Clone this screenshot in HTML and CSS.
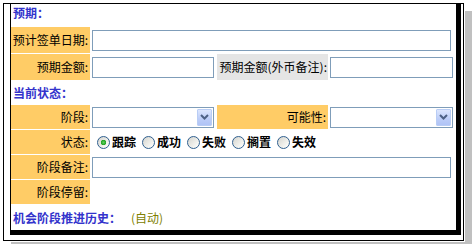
FILE: index.html
```html
<!DOCTYPE html>
<html lang="zh-CN">
<head>
<meta charset="utf-8">
<title>机会</title>
<link rel="stylesheet" href="styles.css">
</head>
<body>
<div class="frame">
  <div class="panel">
    <div class="form">
      <div class="section first">预期：</div>

      <div class="label">预计签单日期:</div>
      <div class="field span3"><input type="text" class="text long"></div>

      <div class="label">预期金额:</div>
      <div class="field"><input type="text" class="text short"></div>
      <div class="label gray">预期金额(外币备注):</div>
      <div class="field"><input type="text" class="text short2"></div>

      <div class="section">当前状态：</div>

      <div class="label">阶段:</div>
      <div class="field">
        <div class="select short">
          <span class="arrow"><svg width="9" height="6" viewBox="0 0 9 6"><path d="M1 1 L4.5 4.5 L8 1" fill="none" stroke="#4d6185" stroke-width="2"/></svg></span>
        </div>
      </div>
      <div class="label">可能性:</div>
      <div class="field">
        <div class="select short2">
          <span class="arrow"><svg width="9" height="6" viewBox="0 0 9 6"><path d="M1 1 L4.5 4.5 L8 1" fill="none" stroke="#4d6185" stroke-width="2"/></svg></span>
        </div>
      </div>

      <div class="label">状态:</div>
      <div class="field span3 radios">
        <label class="opt"><input type="radio" name="st" checked>跟踪</label>
        <label class="opt"><input type="radio" name="st">成功</label>
        <label class="opt"><input type="radio" name="st">失败</label>
        <label class="opt"><input type="radio" name="st">搁置</label>
        <label class="opt"><input type="radio" name="st">失效</label>
      </div>

      <div class="label">阶段备注:</div>
      <div class="field span3"><input type="text" class="text long"></div>

      <div class="label">阶段停留:</div>
      <div class="field span3"></div>

      <div class="section">机会阶段推进历史：<span class="auto">(自动)</span></div>
    </div>
  </div>
</div>
</body>
</html>
```

FILE: styles.css
```css
* { box-sizing: border-box; }

body {
  margin: 0;
  background: #fff;
  font-family: "Noto Sans CJK SC", "Liberation Sans", sans-serif;
  font-size: 12px;
  line-height: 14px;
  color: #000;
}

.frame {
  margin: 3px;
  width: 461px;
  height: 238px;
  border: 1px solid #000;
  padding: 0 2px 5px 6px;
  background: #fff;
  box-shadow: 1px 1px 0 #fff, 8px 8px 0 #c0c0c0;
}

.panel {
  height: 231px;
  border-left: 1px solid #000;
  border-right: 5px solid #000;
  border-bottom: 5px solid #000;
}

.form {
  display: grid;
  grid-template-columns: 79px 125px 111px 1fr;
  grid-template-rows: 22px 26px 26px 23px 24px 24px 24px 24px 25px;
  gap: 1px;
}

.section {
  grid-column: 1 / -1;
  display: flex;
  align-items: center;
  padding-left: 2px;
  color: #3333cc;
  font-weight: bold;
}

.section.first {
  padding-bottom: 4px;
}

.auto {
  color: #808000;
  font-weight: normal;
  margin-left: 10px;
}

.label {
  display: flex;
  align-items: center;
  justify-content: flex-end;
  padding-right: 2px;
  background: #ffcc66;
  white-space: nowrap;
}

.label.gray {
  background: #e5e5e5;
  padding-right: 1px;
}

.field {
  display: flex;
  align-items: center;
  padding-left: 1px;
}

.span3 {
  grid-column: span 3;
}

.text {
  display: block;
  height: 21px;
  margin: 0;
  padding: 0 2px;
  border: 1px solid #7f9db9;
  background: #fff;
  font: inherit;
}

.long { width: 359px; }
.short { width: 122px; }
.short2 { width: 123px; }

.select {
  display: flex;
  justify-content: flex-end;
  height: 21px;
  padding: 1px;
  border: 1px solid #7f9db9;
  background: #fff;
}

.arrow {
  display: flex;
  align-items: center;
  justify-content: center;
  width: 15px;
  border: 1px solid #b9cdf5;
  border-radius: 1px;
  background: linear-gradient(to bottom, #dce6fe, #bccdf8 60%, #b0c4f6);
}

.radios {
  padding-left: 6px;
}

.opt {
  display: flex;
  align-items: center;
  margin-right: 6px;
  font-weight: bold;
}

.opt input {
  appearance: none;
  -webkit-appearance: none;
  width: 13px;
  height: 13px;
  margin: 0 2px 0 0;
  border: 1px solid #2f5f8f;
  border-radius: 50%;
  background: linear-gradient(135deg, #d4d4ce, #f4f4f0 70%, #fff);
}

.opt input:checked {
  background:
    radial-gradient(circle, #5fd35f 0, #21a121 2.5px, transparent 3px),
    linear-gradient(135deg, #d4d4ce, #f4f4f0 70%, #fff);
}
```
